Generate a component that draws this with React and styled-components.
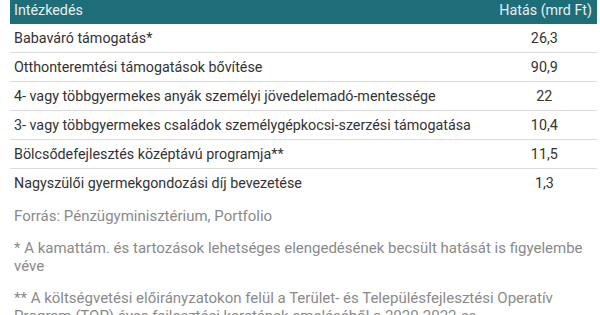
import React from 'react';
import styled, { createGlobalStyle } from 'styled-components';

const GlobalStyle = createGlobalStyle`
  body {
    margin: 0;
    background: #fff;
    font-family: Roboto, "Liberation Sans", sans-serif;
  }
`;

const Wrapper = styled.div`
  width: 587px;
  margin-left: 10px;
`;

const Table = styled.table`
  width: 100%;
  border-collapse: collapse;
  font-size: 14.3px;
  color: #333;
`;

const HeadCell = styled.th`
  background: #1e6e79;
  color: #e9eef0;
  font-weight: 400;
  height: 20px;
  padding: 0 5px 4px 4px;
  line-height: 16px;
  text-align: ${props => (props.right ? 'right' : 'left')};
  white-space: nowrap;
`;

const Row = styled.tr`
  border-bottom: ${props => (props.last ? 'none' : '1px solid #dcdcdc')};
`;

const Cell = styled.td`
  height: 28px;
  padding: 0 4px;
  text-align: ${props => (props.center ? 'center' : 'left')};
  vertical-align: middle;
`;

const Note = styled.p`
  margin: ${props => (props.first ? '10px 0 0' : '14px 0 0')};
  padding: 0 4px;
  font-size: 15px;
  line-height: 18px;
  color: #8a8a8a;
`;

const rows = [
  ['Babaváró támogatás*', '26,3'],
  ['Otthonteremtési támogatások bővítése', '90,9'],
  ['4- vagy többgyermekes anyák személyi jövedelemadó-mentessége', '22'],
  ['3- vagy többgyermekes családok személygépkocsi-szerzési támogatása', '10,4'],
  ['Bölcsődefejlesztés középtávú programja**', '11,5'],
  ['Nagyszülői gyermekgondozási díj bevezetése', '1,3'],
];

export default function App() {
  return (
    <Wrapper>
      <GlobalStyle />
      <Table>
        <thead>
          <tr>
            <HeadCell>Intézkedés</HeadCell>
            <HeadCell right>Hatás (mrd Ft)</HeadCell>
          </tr>
        </thead>
        <tbody>
          {rows.map(([label, value], i) => (
            <Row key={label} last={i === rows.length - 1}>
              <Cell>{label}</Cell>
              <Cell center>{value}</Cell>
            </Row>
          ))}
        </tbody>
      </Table>
      <Note first>Forrás: Pénzügyminisztérium, Portfolio</Note>
      <Note>* A kamattám. és tartozások lehetséges elengedésének becsült hatását is figyelembe véve</Note>
      <Note>** A költségvetési előirányzatokon felül a Terület- és Településfejlesztési Operatív Program (TOP) éves fejlesztési keretének emeléséből a 2020-2022-es</Note>
    </Wrapper>
  );
}
